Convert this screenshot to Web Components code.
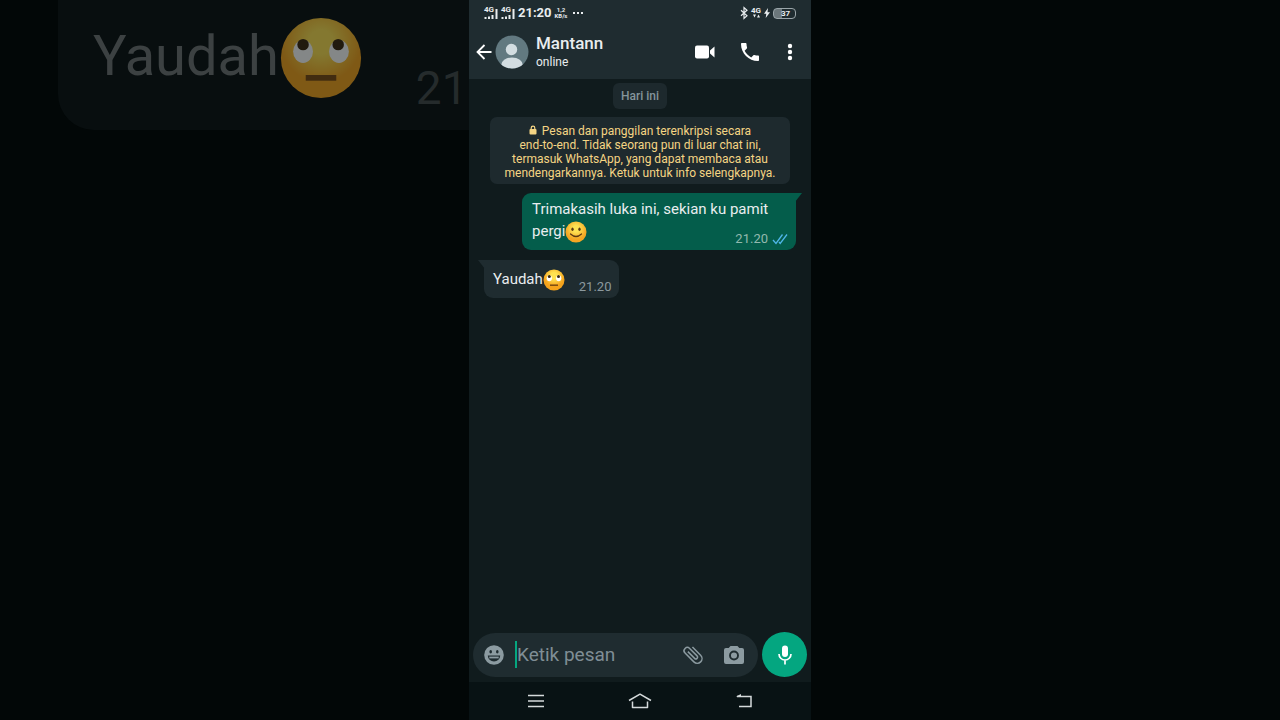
<!DOCTYPE html>
<html lang="id">
<head>
<meta charset="utf-8">
<title>Mantann</title>
<style>
    body {
        margin: 0;
        min-height: 100vh;
        display: grid;
        grid-template-columns: minmax(0, 1fr) 47.5vh minmax(0, 1fr);
        background: #020707;
        font-family: Roboto, "Liberation Sans", sans-serif;
        color: #e9edef;
        overflow: hidden;
    }

    main {
        display: flex;
        flex-direction: column;
        background: #101b1d;
    }

    .messages {
        flex: 1;
        display: flex;
        flex-direction: column;
        padding: 4px 15px 0;
    }
</style>
</head>
<body>
    <chat-backdrop>Yaudah<chat-icon name="eyes" slot="emoji"></chat-icon></chat-backdrop>
    <main>
        <status-bar></status-bar>
        <chat-header name="Mantann" status="online"></chat-header>
        <section class="messages">
            <date-chip>Hari ini</date-chip>
            <chat-notice>Pesan dan panggilan terenkripsi secara<br>end-to-end. Tidak seorang pun di luar chat ini,<br>termasuk WhatsApp, yang dapat membaca atau<br>mendengarkannya. Ketuk untuk info selengkapnya.</chat-notice>
            <chat-bubble side="out" time="21.20">Trimakasih luka ini, sekian ku pamit pergi<chat-icon name="smile"></chat-icon></chat-bubble>
            <chat-bubble side="in" time="21.20">Yaudah<chat-icon name="eyes"></chat-icon></chat-bubble>
        </section>
        <message-composer></message-composer>
        <phone-nav></phone-nav>
    </main>

<script>
    // name: [viewBox, markup]
    const icons = {
        back: ['0 0 16 16', '<path d="M15.500 8H2M8.500 1L1.500 8l7 7" fill="none" stroke="currentColor" stroke-width="1.800"/>'],
        avatar: ['0 0 34 34', '<defs><clipPath id="c"><circle cx="17" cy="17" r="16.500"/></clipPath></defs><circle cx="17" cy="17" r="16.500" fill="#627980"/><g clip-path="url(#c)" fill="#d3dde1"><circle cx="16.500" cy="14.500" r="5.700"/><ellipse cx="17" cy="30.500" rx="11" ry="8"/></g>'],
        video: ['0 0 20 14', '<rect x="0" y="0.500" width="14" height="13" rx="2" fill="currentColor"/><path d="M15 5.500L19.500 1.500v11L15 8.500z" fill="currentColor"/>'],
        phone: ['3 3 18 18', '<path fill="currentColor" d="M6.620 10.790c1.440 2.830 3.760 5.140 6.590 6.590l2.200-2.200c.27-.27.67-.36 1.020-.24 1.120.37 2.330.57 3.570.57.55 0 1 .45 1 1V20c0 .55-.45 1-1 1-9.390 0-17-7.610-17-17 0-.55.45-1 1-1h3.500c.55 0 1 .45 1 1 0 1.250.2 2.450.57 3.570.11.35.03.74-.25 1.020z"/>'],
        more: ['0 0 6 18', '<g fill="currentColor"><circle cx="3" cy="3" r="2.200"/><circle cx="3" cy="9" r="2.200"/><circle cx="3" cy="15" r="2.200"/></g>'],
        lock: ['0 0 8 10', '<rect x="0.500" y="4" width="7" height="5.500" rx="1" fill="currentColor"/><path d="M2.200 4.500V3a1.800 1.800 0 0 1 3.600 0v1.500" fill="none" stroke="currentColor" stroke-width="1.200"/>'],
        ticks: ['0 0 16 12', '<path d="M1 7l3 3.500L10.500 1.500M7 9l1.200 1.500L15 1.500" fill="none" stroke="#4fb6e8" stroke-width="1.300"/>'],
        face: ['0 0 20 20', '<circle cx="10" cy="10" r="9.800" fill="currentColor"/><g fill="#1f2c30"><ellipse cx="6.700" cy="6.800" rx="1.300" ry="1.700"/><ellipse cx="13.300" cy="6.800" rx="1.300" ry="1.700"/><path d="M3.800 10.500h12.400a6.200 6 0 0 1-12.400 0z"/></g><path d="M5.300 12.500h9.400" stroke="currentColor" stroke-width="1.800"/>'],
        clip: ['2 2 20 20', '<path transform="rotate(-45 12 12)" fill="currentColor" d="M16.500 6v11.500a4 4 0 0 1-8 0V5a2.500 2.500 0 0 1 5 0v10.500a1 1 0 0 1-2 0V6H10v9.500a2.500 2.500 0 0 0 5 0V5a4 4 0 0 0-8 0v12.500a5.500 5.500 0 0 0 11 0V6z"/>'],
        camera: ['0 0 20 18', '<path d="M6.500 0h7l1.800 2H18a2 2 0 0 1 2 2v12a2 2 0 0 1-2 2H2a2 2 0 0 1-2-2V4a2 2 0 0 1 2-2h2.700z" fill="currentColor"/><circle cx="10" cy="9.500" r="4" fill="none" stroke="#1f2c30" stroke-width="1.900"/>'],
        mic: ['0 0 14 20', '<rect x="4" y="0.500" width="6" height="11.500" rx="3" fill="currentColor"/><path d="M1 9a6 6 0 0 0 12 0M7 15v4.500" fill="none" stroke="currentColor" stroke-width="1.700"/>'],
        menu: ['0 0 16 14', '<path d="M0 1.500h16M0 7h16M0 12.500h16" stroke="currentColor" stroke-width="1.500"/>'],
        home: ['0 0 24 16', '<path d="M1 7.500L12 1.200l11 6.300M4.500 8.500v6h15v-6" fill="none" stroke="currentColor" stroke-width="1.500" stroke-linejoin="round"/>'],
        recent: ['0 0 16 14', '<path d="M1 2.500h14v10H3" fill="none" stroke="currentColor" stroke-width="1.500"/><path d="M0 2.500L5 0v3z" fill="currentColor"/>'],
        bars: ['0 0 14 6', '<path d="M1.500 6V4M5 6V3.500M8.500 6V2M12.500 6V-4" stroke="currentColor" stroke-width="2"/>'],
        bluetooth: ['0 0 8 12', '<path d="M1 3.200l6 5.600-3 2.700V.5l3 2.700-6 5.600" fill="none" stroke="currentColor" stroke-width="1.200"/>'],
        arrows: ['0 0 10 4', '<path d="M2 .5h3L3.500 3.500zM6 3.500h3L7.500.5z" fill="currentColor"/>'],
        bolt: ['0 0 6 10', '<path d="M4 0L0 5.700h2.300L1.700 10 6 4.200H3.500z" fill="currentColor"/>'],
        dots: ['0 0 12 2', '<path d="M1 0h2v2H1zM5 0h2v2H5zM9 0h2v2H9z" fill="currentColor"/>'],
        smile: ['0 0 22 22', '<defs><radialGradient id="g" cy=".35"><stop offset=".3" stop-color="#ffe252"/><stop offset="1" stop-color="#f5a623"/></radialGradient></defs><circle cx="11" cy="11" r="10.500" fill="url(#g)"/><g fill="#5c3912"><ellipse cx="7.500" cy="8.300" rx="1.200" ry="1.700"/><ellipse cx="14.500" cy="8.300" rx="1.200" ry="1.700"/></g><path d="M5.500 13q5.500 5 11 0" fill="none" stroke="#5c3912" stroke-width="1.200" stroke-linecap="round"/>'],
        eyes: ['0 0 22 22', '<defs><radialGradient id="g" cy=".3"><stop offset=".3" stop-color="#ffe252"/><stop offset="1" stop-color="#f5a31c"/></radialGradient></defs><circle cx="11" cy="11" r="10.500" fill="url(#g)"/><g fill="#fff"><ellipse cx="6.300" cy="9.300" rx="2.600" ry="3"/><ellipse cx="15.700" cy="9.300" rx="2.600" ry="3"/></g><g fill="#3a260e"><circle cx="6.300" cy="7.500" r="1.500"/><circle cx="15.500" cy="7.500" r="1.500"/></g><path d="M7 16.200h8" stroke="#7a4b12" stroke-width="1.500"/>']
    };

    class ChatIcon extends HTMLElement {
        constructor() {
            super();
            this.attachShadow({ mode: 'open' });
        }

        connectedCallback() {
            const [box, markup] = icons[this.getAttribute('name')];
            const size = box.split(' ');
            this.shadowRoot.innerHTML = `
            <style>
            :host {
                display: inline-block;
                flex: none;
                width: var(--icon-width, ${size[2]}px);
                height: var(--icon-height, ${size[3]}px);
            }

            svg {
                display: block;
                width: 100%;
                height: 100%;
                overflow: visible;
            }
            </style>
            <svg viewBox="${box}" aria-hidden="true">${markup}</svg>`;
        }
    }

    // Enlarged, dimmed copy of the last message behind the phone
    class ChatBackdrop extends HTMLElement {
        constructor() {
            super();
            this.attachShadow({ mode: 'open' }).innerHTML = `
            <style>
            :host {
                display: block;
                overflow: hidden;
            }

            .bubble {
                display: flex;
                align-items: flex-start;
                height: 130px;
                box-sizing: border-box;
                margin-left: 58px;
                padding: 16px 0 0 35px;
                border-radius: 0 0 0 36px;
                background: #080e0f;
                color: #3c4142;
                font-size: 56px;
                line-height: 80px;
                white-space: nowrap;
            }

            ::slotted(chat-icon) {
                --icon-width: 84px;
                --icon-height: 84px;
                opacity: 0.5;
            }

            time {
                margin: 32px 0 0 53px;
                font-size: 46px;
                color: #252b2c;
            }
            </style>
            <div class="bubble" aria-hidden="true"><slot></slot><slot name="emoji"></slot><time>21</time></div>`;
        }
    }

    class StatusBar extends HTMLElement {
        constructor() {
            super();
            this.attachShadow({ mode: 'open' }).innerHTML = `
            <style>
            :host {
                display: flex;
                align-items: center;
                gap: 3px;
                height: 26px;
                padding: 0 15px;
                background: #1f2c30;
                font-weight: 700;
            }

            .signal, .rate {
                display: flex;
                flex-direction: column;
                font-size: 8px;
                line-height: 6px;
            }

            .rate {
                margin-right: 2px;
                font-size: 6px;
                align-items: center;
            }

            .clock {
                font-size: 13px;
                line-height: 16px;
            }

            .space {
                flex: 1;
            }

            .battery {
                box-sizing: border-box;
                width: 23px;
                padding-left: 2px;
                border: 1px solid #9aa5a9;
                border-radius: 4px;
                background: linear-gradient(90deg, #6b777b 37%, transparent 37%);
                font-size: 8px;
                line-height: 9px;
                text-align: center;
            }
            </style>
            <span class="signal">4G<chat-icon name="bars"></chat-icon></span>
            <span class="signal">4G<chat-icon name="bars"></chat-icon></span>
            <span class="clock">21:20</span>
            <span class="rate"><span>1,2</span><span>KB/s</span></span>
            <chat-icon name="dots"></chat-icon>
            <span class="space"></span>
            <chat-icon name="bluetooth"></chat-icon>
            <span class="signal">4G<chat-icon name="arrows"></chat-icon></span>
            <chat-icon name="bolt"></chat-icon>
            <span class="battery">37</span>`;
        }
    }

    class ChatHeader extends HTMLElement {
        constructor() {
            super();
            this.attachShadow({ mode: 'open' }).innerHTML = `
            <style>
            :host {
                display: flex;
                align-items: center;
                box-sizing: border-box;
                height: 53px;
                padding: 0 1px 1px 7px;
                background: #1f2c30;
            }

            button {
                display: flex;
                align-items: center;
                justify-content: center;
                width: 40px;
                height: 40px;
                padding: 0;
                border: 0;
                background: none;
                color: #fff;
            }

            .back {
                width: 16px;
                margin-right: 3px;
            }

            .video {
                width: 50px;
            }

            .who {
                flex: 1;
                padding-left: 7px;
            }

            h1 {
                margin: 0;
                font-size: 17px;
                line-height: 20px;
                font-weight: 500;
            }

            p {
                margin: 0;
                font-size: 12px;
                line-height: 18px;
            }
            </style>
            <button class="back" aria-label="Kembali"><chat-icon name="back"></chat-icon></button>
            <chat-icon name="avatar"></chat-icon>
            <div class="who"><h1></h1><p></p></div>
            <button class="video" aria-label="Panggilan video"><chat-icon name="video"></chat-icon></button>
            <button aria-label="Panggilan suara"><chat-icon name="phone"></chat-icon></button>
            <button aria-label="Menu"><chat-icon name="more"></chat-icon></button>`;
        }

        connectedCallback() {
            this.shadowRoot.querySelector('h1').textContent = this.getAttribute('name');
            this.shadowRoot.querySelector('p').textContent = this.getAttribute('status');
        }
    }

    class DateChip extends HTMLElement {
        constructor() {
            super();
            this.attachShadow({ mode: 'open' }).innerHTML = `
            <style>
            :host {
                display: block;
                align-self: center;
                padding: 5px 8px;
                border-radius: 6px;
                background: #1d292d;
                color: #84949b;
                font-size: 12px;
                line-height: 16px;
                font-weight: 500;
            }
            </style>
            <slot></slot>`;
        }
    }

    class ChatNotice extends HTMLElement {
        constructor() {
            super();
            this.attachShadow({ mode: 'open' }).innerHTML = `
            <style>
            :host {
                display: block;
                margin: 8px 6px 9px;
                padding: 7px 0 4px;
                border-radius: 7px;
                background: #1e2a2e;
                color: #f5d584;
                font-size: 12px;
                line-height: 14px;
                text-align: center;
                white-space: nowrap;
            }

            chat-icon {
                margin-right: 2px;
            }
            </style>
            <chat-icon name="lock"></chat-icon> <slot></slot>`;
        }
    }

    class ChatBubble extends HTMLElement {
        constructor() {
            super();
            this.attachShadow({ mode: 'open' }).innerHTML = `
            <style>
            :host {
                display: block;
                position: relative;
                align-self: flex-start;
                box-sizing: border-box;
                max-width: 274px;
                margin-bottom: 10px;
                padding: 8px 8px 8px 9px;
                border-radius: 0 9px 9px 9px;
                background: #1f2c30;
                font-size: 15px;
                line-height: 22px;
            }

            :host([side="out"]) {
                align-self: flex-end;
                padding: 5px 8px 8px 10px;
                border-radius: 9px 0 9px 9px;
                background: #045d4b;
            }

            /* tail */
            :host::before {
                content: "";
                position: absolute;
                top: 0;
                left: -6px;
                width: 7px;
                height: 9px;
                background: inherit;
                clip-path: polygon(0 0, 100% 0, 100% 100%);
            }

            :host([side="out"])::before {
                left: auto;
                right: -6px;
                clip-path: polygon(0 0, 100% 0, 0 100%);
            }

            .meta {
                float: right;
                display: flex;
                align-items: center;
                gap: 4px;
                margin: 11px 0 -5px 14px;
                font-size: 13px;
                line-height: 16px;
                color: #8b999e;
            }

            :host([side="out"]) .meta {
                color: #92b9ae;
            }

            :host([side="in"]) .meta chat-icon {
                display: none;
            }

            ::slotted(chat-icon) {
                vertical-align: -5px;
                margin: -2px 0;
            }
            </style>
            <slot></slot><span class="meta"><time></time><chat-icon name="ticks"></chat-icon></span>`;
        }

        connectedCallback() {
            this.shadowRoot.querySelector('time').textContent = this.getAttribute('time');
        }
    }

    class MessageComposer extends HTMLElement {
        constructor() {
            super();
            this.attachShadow({ mode: 'open' }).innerHTML = `
            <style>
            :host {
                display: flex;
                align-items: center;
                gap: 4px;
                padding: 0 4px 5px;
            }

            .field {
                flex: 1;
                min-width: 0;
                display: flex;
                align-items: center;
                height: 44px;
                padding: 0 14px 0 11px;
                box-sizing: border-box;
                border-radius: 22px;
                background: #1f2c30;
                color: #8c9ba1;
            }

            button {
                display: flex;
                flex: none;
                padding: 0;
                border: 0;
                background: none;
                color: inherit;
            }

            input {
                flex: 1;
                min-width: 0;
                height: 27px;
                margin: 0 11px;
                padding: 0;
                border: 0;
                border-left: 2px solid #05a680;
                background: none;
                color: #e9edef;
                font: 19px Roboto, "Liberation Sans", sans-serif;
                outline: none;
            }

            input::placeholder {
                color: #7f8e95;
                opacity: 1;
            }

            .camera {
                margin-left: 21px;
            }

            .mic {
                width: 45px;
                height: 45px;
                align-items: center;
                justify-content: center;
                border-radius: 50%;
                background: #04a680;
                color: #fff;
            }
            </style>
            <div class="field">
                <button aria-label="Emoji"><chat-icon name="face"></chat-icon></button>
                <input type="text" placeholder="Ketik pesan" aria-label="Ketik pesan">
                <button aria-label="Lampirkan"><chat-icon name="clip"></chat-icon></button>
                <button class="camera" aria-label="Kamera"><chat-icon name="camera"></chat-icon></button>
            </div>
            <button class="mic" aria-label="Pesan suara"><chat-icon name="mic"></chat-icon></button>`;
        }
    }

    class PhoneNav extends HTMLElement {
        constructor() {
            super();
            this.attachShadow({ mode: 'open' }).innerHTML = `
            <style>
            :host {
                display: grid;
                grid-template-columns: repeat(3, 1fr);
                height: 38px;
                padding: 0 15px;
                background: #081214;
            }

            button {
                display: flex;
                align-items: center;
                justify-content: center;
                padding: 0;
                border: 0;
                background: none;
                color: #d5dadb;
            }
            </style>
            <button aria-label="Aplikasi terbaru"><chat-icon name="menu"></chat-icon></button>
            <button aria-label="Beranda"><chat-icon name="home"></chat-icon></button>
            <button aria-label="Kembali"><chat-icon name="recent"></chat-icon></button>`;
        }
    }

    customElements.define('chat-icon', ChatIcon);
    customElements.define('chat-backdrop', ChatBackdrop);
    customElements.define('status-bar', StatusBar);
    customElements.define('chat-header', ChatHeader);
    customElements.define('date-chip', DateChip);
    customElements.define('chat-notice', ChatNotice);
    customElements.define('chat-bubble', ChatBubble);
    customElements.define('message-composer', MessageComposer);
    customElements.define('phone-nav', PhoneNav);
</script>
</body>
</html>
